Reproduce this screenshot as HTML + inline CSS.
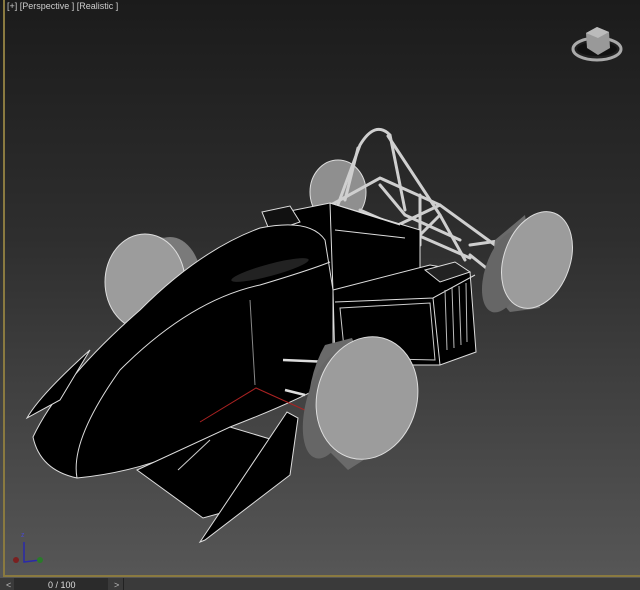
<!DOCTYPE html>
<html><head><meta charset="utf-8"><style>
html,body{margin:0;padding:0;width:640px;height:590px;overflow:hidden;background:#1c1c1c}
svg{display:block}
text{font-family:"Liberation Sans",sans-serif}
</style></head><body>
<svg width="640" height="590" viewBox="0 0 640 590" xmlns="http://www.w3.org/2000/svg">
<defs>
<linearGradient id="bg" x1="0" y1="0" x2="0" y2="1">
<stop offset="0" stop-color="#1b1b1b"/><stop offset="0.4" stop-color="#2e2e2e"/><stop offset="1" stop-color="#585858"/>
</linearGradient>
</defs>
<rect width="640" height="590" fill="url(#bg)"/>
<rect x="3" y="0" width="2" height="577" fill="#8a7a40"/>
<rect x="3" y="575" width="637" height="2" fill="#8a7a40"/>
<rect x="0" y="578" width="640" height="12" fill="#3a3a3a"/>
<rect x="14" y="578" width="94" height="12" fill="#2b2b2b"/>
<text x="6" y="588" font-size="9" fill="#bbb">&lt;</text>
<text x="48" y="588" font-size="9" fill="#ddd">0 / 100</text>
<text x="114" y="588" font-size="9" fill="#bbb">&gt;</text>
<rect x="123" y="578" width="1" height="12" fill="#222"/>
<text x="7" y="9" font-size="9" fill="#ccc">[+] [Perspective ] [Realistic ]</text>

<ellipse cx="597" cy="49" rx="24" ry="11" fill="none" stroke="#aaa" stroke-width="3"/>
<ellipse cx="597" cy="49" rx="20" ry="7" fill="#111"/>
<path d="M586 33 L597 27 L609 32 L610 48 L598 55 L587 48 Z" fill="#999"/>
<path d="M586 33 L597 27 L609 32 L598 38 Z" fill="#bbb"/>

<ellipse cx="338" cy="192" rx="28" ry="32" fill="#8f8f8f" stroke="#ddd" stroke-width="1"/>
<path d="M145 234 L175 240 Q200 270 195 320 L150 330 Z" fill="#6e6e6e"/>
<ellipse cx="170" cy="285" rx="32" ry="48" fill="#7a7a7a"/>
<ellipse cx="145" cy="282" rx="40" ry="48" fill="#9c9c9c" stroke="#ddd"/>

<g stroke="#cfcfcf" stroke-width="3" fill="none" stroke-linecap="round">
<path d="M333 218 L360 145 Q375 120 390 135 L405 210"/>
<path d="M388 136 L440 215 L465 260"/>
<path d="M358 148 L345 200"/>
<path d="M300 222 L380 178 L440 205 L495 245"/>
<path d="M335 255 L440 205"/>
<path d="M360 210 L470 258"/>
<path d="M420 195 L420 245 M440 215 L405 250"/>
<path d="M380 185 L405 215 L460 240"/>
<path d="M470 245 L505 240 M470 255 L495 275"/>
</g>

<path d="M525 215 L495 240 Q488 290 510 312 L540 308 Z" fill="#6a6a6a"/>
<ellipse cx="505" cy="272" rx="20" ry="42" transform="rotate(18 505 272)" fill="#666"/>
<ellipse cx="537" cy="260" rx="33" ry="50" transform="rotate(20 537 260)" fill="#9c9c9c" stroke="#ddd"/>

<path d="M275 214 L330 203 L420 230 L420 270 L333 292 L270 240 Z" fill="#000" stroke="#ddd"/>
<path d="M330 203 L333 292 M330 203 L400 225 M335 230 L405 238" stroke="#ddd" fill="none"/>
<path d="M262 212 L290 206 L300 222 L270 232 Z" fill="#111" stroke="#ddd"/>

<path d="M333 290 L430 265 L470 272 L476 352 L440 365 L335 365 Z" fill="#000" stroke="#ddd"/>
<path d="M335 302 L433 298 L475 275 M433 298 L440 365" fill="none" stroke="#ddd"/>
<path d="M340 308 L430 303 L435 360 L345 358 Z" fill="none" stroke="#ccc"/>
<path d="M425 270 L455 262 L470 272 L440 282 Z" fill="#222" stroke="#ddd"/>
<g stroke="#bbb" fill="none"><path d="M445 290 L447 350 M452 288 L454 348 M459 286 L461 345 M466 283 L467 342"/></g>

<path d="M33 437 Q60 380 140 310 Q200 250 260 228 Q310 218 325 240 L333 290 L333 380 Q300 400 230 427 Q160 470 77 478 Q40 470 33 437 Z" fill="#000" stroke="#ddd"/>
<path d="M77 478 Q70 440 120 370 Q190 300 260 285 Q310 270 330 262" fill="none" stroke="#ddd"/>
<path d="M250 300 L255 385" stroke="#888" fill="none"/>
<ellipse cx="270" cy="270" rx="40" ry="6" transform="rotate(-15 270 270)" fill="#222"/>
<path d="M27 418 Q40 395 90 350 L60 400 Z" fill="#000" stroke="#ddd"/>
<path d="M137 470 L230 427 L290 445 L250 505 L203 518 Z" fill="#000" stroke="#ddd"/>
<path d="M200 542 L287 412 L298 418 L290 475 L205 540 Z" fill="#000" stroke="#ddd"/>
<path d="M178 470 L210 440" stroke="#ccc" fill="none"/>
<path d="M283 360 L330 362 M285 390 L305 395" stroke="#ddd" stroke-width="2.5"/>
<path d="M200 422 L256 388 L318 416" stroke="#a22" fill="none"/>

<path d="M352 338 L325 345 Q305 380 308 430 L348 470 L395 440 Z" fill="#6a6a6a"/>
<ellipse cx="330" cy="405" rx="24" ry="55" transform="rotate(15 330 405)" fill="#666"/>
<ellipse cx="367" cy="398" rx="50" ry="62" transform="rotate(15 367 398)" fill="#9c9c9c" stroke="#ddd"/>

<path d="M24 542 L24 562 L40 560" stroke="#2a2aaa" stroke-width="1.5" fill="none"/>
<circle cx="16" cy="560" r="3" fill="#7a2020"/>
<circle cx="40" cy="560" r="3" fill="#2a7a2a"/>
<text x="21" y="537" font-size="7" fill="#4a4acc">z</text>
</svg>
</body></html>
